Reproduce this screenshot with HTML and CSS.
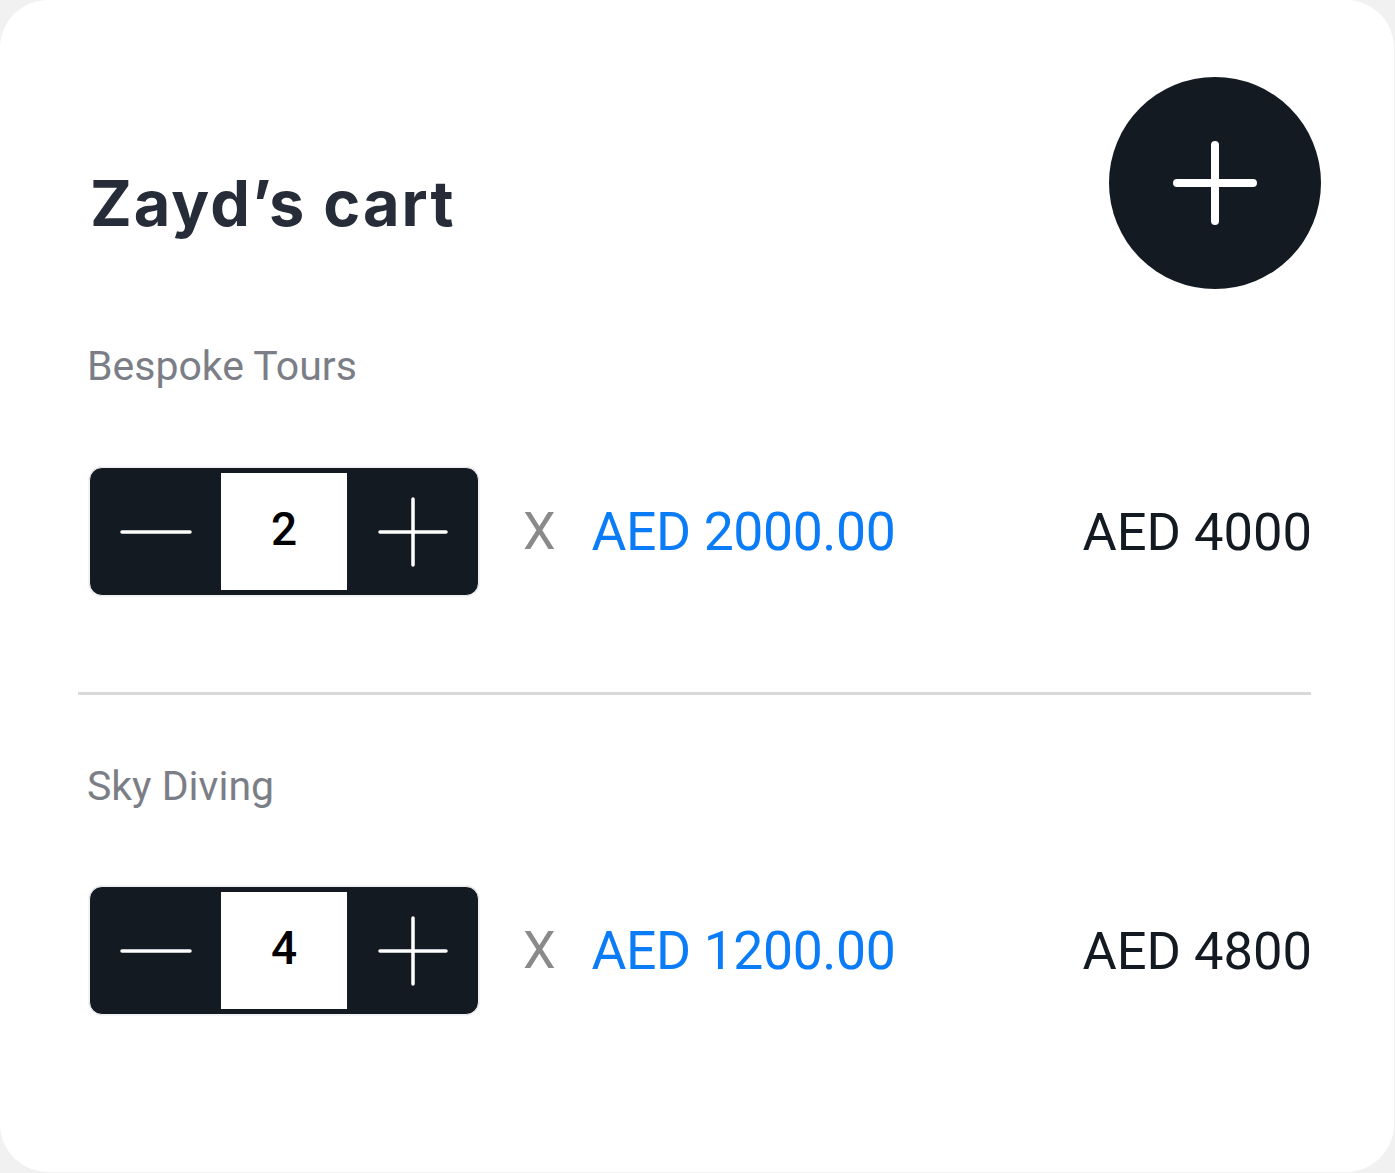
FILE: index.html
```html
<!DOCTYPE html>
<html lang="en">
<head>
<meta charset="utf-8">
<title>Zayd’s cart</title>
<link rel="stylesheet" href="styles.css">
</head>
<body>
<div class="card">
  <header class="head">
    <h1 class="title">Zayd’s cart</h1>
    <button class="add" aria-label="Add item">
      <svg width="84" height="84" viewBox="0 0 84 84"><path d="M42 4v76M4 42h76" stroke="#fff" stroke-width="8" stroke-linecap="round" fill="none"/></svg>
    </button>
  </header>

  <section class="item">
    <div class="item-name">Bespoke Tours</div>
    <div class="row">
      <div class="stepper">
        <button class="step" aria-label="Decrease"><svg width="72" height="8" viewBox="0 0 72 8"><path d="M2 4h68" stroke="#fff" stroke-width="3.5" stroke-linecap="round"/></svg></button>
        <div class="qty">2</div>
        <button class="step" aria-label="Increase"><svg width="70" height="70" viewBox="0 0 70 70"><path d="M35 2v66M2 35h66" stroke="#fff" stroke-width="3.5" stroke-linecap="round" fill="none"/></svg></button>
      </div>
      <span class="times">X</span>
      <span class="unit">AED 2000.00</span>
      <span class="total">AED 4000</span>
    </div>
  </section>

  <hr class="divider">

  <section class="item second">
    <div class="item-name">Sky Diving</div>
    <div class="row">
      <div class="stepper">
        <button class="step" aria-label="Decrease"><svg width="72" height="8" viewBox="0 0 72 8"><path d="M2 4h68" stroke="#fff" stroke-width="3.5" stroke-linecap="round"/></svg></button>
        <div class="qty">4</div>
        <button class="step" aria-label="Increase"><svg width="70" height="70" viewBox="0 0 70 70"><path d="M35 2v66M2 35h66" stroke="#fff" stroke-width="3.5" stroke-linecap="round" fill="none"/></svg></button>
      </div>
      <span class="times">X</span>
      <span class="unit">AED 1200.00</span>
      <span class="total">AED 4800</span>
    </div>
  </section>
</div>
</body>
</html>
```
FILE: styles.css
```css
* { box-sizing: border-box; }
html, body { margin: 0; padding: 0; }
body {
  background: #f1f1f2;
  width: 1395px;
  height: 1173px;
  overflow: hidden;
  font-family: Roboto, "Liberation Sans", sans-serif;
}
.card {
  width: 1394px;
  height: 1172px;
  background: #ffffff;
  border-radius: 48px;
  padding: 77px 73px 0 78px;
  display: flex;
  flex-direction: column;
}
.head {
  display: flex;
  justify-content: space-between;
  align-items: flex-start;
  height: 212px;
}
.title {
  margin: 95px 0 0 12px;
  font-family: Inter, "DejaVu Sans", sans-serif;
  font-weight: 700;
  font-size: 63px;
  line-height: 1;
  letter-spacing: 2px;
  color: #272d38;
}
.add {
  width: 212px;
  height: 212px;
  border: 0;
  padding: 0;
  border-radius: 50%;
  background: #131a21;
  display: flex;
  align-items: center;
  justify-content: center;
}
.add svg { display: block; }
.item { padding: 0 9px 0 11px; }
.item:first-of-type { margin-top: 54px; }
.item-name {
  font-size: 41px;
  line-height: 46px;
  color: #7b7e86;
  margin-left: -2px;
}
.row {
  display: flex;
  align-items: center;
  margin-top: 78px;
}
.stepper {
  width: 390px;
  height: 129px;
  border: 1px solid #f0f1f3;
  border-radius: 13px;
  background: #131a21;
  display: flex;
  align-items: stretch;
  padding: 5px 0;
  box-shadow: 0 0 0 1px #f4f4f6;
}
.step {
  flex: 1;
  border: 0;
  background: transparent;
  padding: 0;
  display: flex;
  align-items: center;
  justify-content: center;
}
.step svg { display: block; }
.qty {
  width: 126px;
  background: #ffffff;
  display: flex;
  align-items: center;
  justify-content: center;
  font-size: 46px;
  font-weight: 500;
  color: #000;
  padding-bottom: 6px;
}
.times {
  margin-left: 44px;
  font-size: 52px;
  color: #8a8a8a;
}
.unit {
  margin-left: 36px;
  font-size: 53.5px;
  color: #0b7cf7;
  letter-spacing: -0.4px;
}
.total {
  margin-left: auto;
  font-size: 52.5px;
  color: #131a21;
}
.divider {
  margin: 96px 10px 0 0;
  border: 0;
  height: 3px;
  background: #d9d9d9;
}
.item.second { margin-top: 68px; }
.item.second .row { margin-top: 77px; }
```
